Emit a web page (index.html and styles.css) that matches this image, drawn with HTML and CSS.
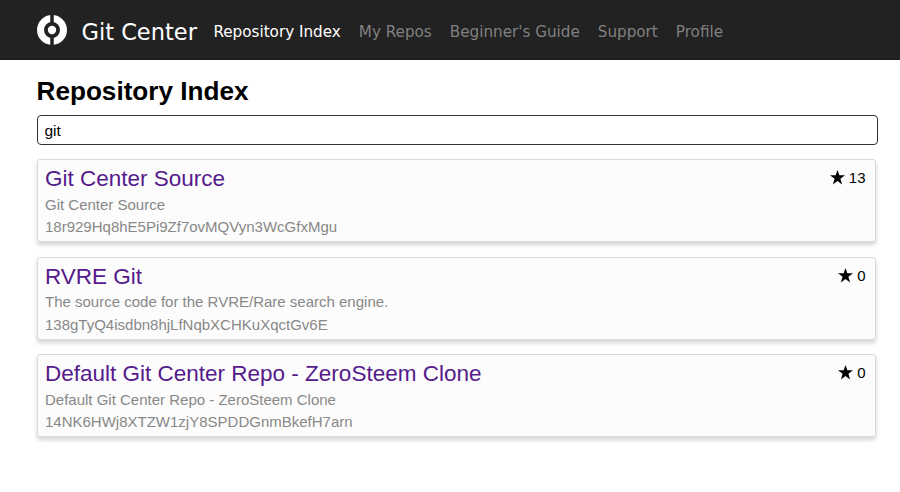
FILE: index.html
```html
<!DOCTYPE html>
<html lang="en">
<head>
<meta charset="utf-8">
<title>Git Center</title>
<link rel="stylesheet" href="styles.css">
</head>
<body>
<header class="navbar">
  <svg class="logo" viewBox="0 0 30 30"><circle cx="15" cy="15" r="11.500" fill="none" stroke="#fff" stroke-width="7"/><path d="M15 0v8M15 22v8" stroke="#222" stroke-width="3.500"/><circle cx="15" cy="15" r="4.200" fill="#fff"/></svg>
  <a class="brand">Git Center</a>
  <nav class="links"><a class="active">Repository Index</a><a>My Repos</a><a>Beginner's Guide</a><a>Support</a><a>Profile</a></nav>
</header>
<main>
  <h1>Repository Index</h1>
  <input class="search" type="text" value="git">
  <article class="repo">
    <div class="top"><h2>Git Center Source</h2><span class="stars"><svg class="star" viewBox="0 0 14 14"><path d="M7 0l1.700 5H14L9.700 8.200 11.300 13.500 7 10.300 2.700 13.500 4.300 8.200 0 5h5.300z"/></svg>13</span></div>
    <p>Git Center Source</p><p>18r929Hq8hE5Pi9Zf7ovMQVyn3WcGfxMgu</p>
  </article>
  <article class="repo">
    <div class="top"><h2>RVRE Git</h2><span class="stars"><svg class="star" viewBox="0 0 14 14"><path d="M7 0l1.700 5H14L9.700 8.200 11.300 13.500 7 10.300 2.700 13.500 4.300 8.200 0 5h5.300z"/></svg>0</span></div>
    <p>The source code for the RVRE/Rare search engine.</p><p>138gTyQ4isdbn8hjLfNqbXCHKuXqctGv6E</p>
  </article>
  <article class="repo">
    <div class="top"><h2>Default Git Center Repo - ZeroSteem Clone</h2><span class="stars"><svg class="star" viewBox="0 0 14 14"><path d="M7 0l1.700 5H14L9.700 8.200 11.300 13.500 7 10.300 2.700 13.500 4.300 8.200 0 5h5.300z"/></svg>0</span></div>
    <p>Default Git Center Repo - ZeroSteem Clone</p><p>14NK6HWj8XTZW1zjY8SPDDGnmBkefH7arn</p>
  </article>
</main>
</body>
</html>
```
FILE: styles.css
```css
* { box-sizing: border-box; }
body { margin: 0; background: #fff; font-family: "Liberation Sans", Arial, sans-serif; }
.navbar { height: 60px; padding: 0 37px 0 36.500px; display: flex; align-items: center; background: #222; border-bottom: 1px solid #1a1a1a; font-family: "DejaVu Sans", sans-serif; }
.logo { width: 30px; height: 30px; }
.brand { margin-left: 15px; padding-top: 4px; font-size: 22.500px; color: #fff; white-space: nowrap; }
.links { display: flex; gap: 18px; margin-left: 16.500px; padding-top: 4px; font-size: 15.200px; color: #808080; white-space: nowrap; }
.active { color: #fff; }
main { padding: 16px 25px 0 36.500px; }
h1 { margin: 0; font-size: 26.150px; line-height: 30px; }
.search { display: block; width: 841px; height: 30px; margin: 9px 0 14px; -webkit-appearance: none; appearance: none; padding: 1px 7px 0; border: 1px solid #333; border-radius: 4px; font: 15.500px "Liberation Sans", sans-serif; }
.repo { width: 839px; height: 83px; margin-bottom: 14.500px; padding: 5px 9px 0 7.500px; background: #fcfcfc; border: 1px solid #dadada; border-radius: 3px; box-shadow: 0 3px 4px #d4d4d4; }
.top { display: flex; justify-content: space-between; height: 28.600px; }
h2 { margin: 0; font-size: 22.500px; line-height: 27px; font-weight: 400; color: #551a8b; }
.stars { display: flex; align-items: center; gap: 4px; height: 25px; font-size: 15px; }
.star { width: 15px; height: 15px; }
p { margin: 0; font-size: 15px; line-height: 22.500px; color: #888; }
```
